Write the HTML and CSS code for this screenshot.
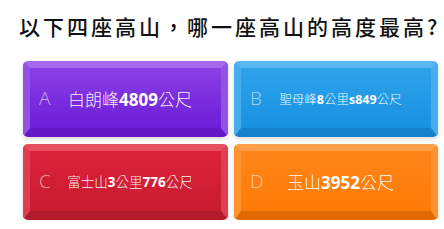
FILE: index.html
```html
<!DOCTYPE html>
<html lang="zh-Hant">
<head>
    <meta charset="UTF-8">
    <meta name="viewport" content="width=device-width, initial-scale=1.0">
    <title>高山問答</title>
    <link rel="stylesheet" href="styles.css">
</head>
<body>

<div class="quiz">
    <h1 class="question">以下四座高山，哪一座高山的高度最高?</h1>

    <div class="options">
        <button class="option option-a">
            <span class="key">A</span>
            <span class="label size-lg">白朗峰<b>4809</b>公尺</span>
        </button>
        <button class="option option-b">
            <span class="key">B</span>
            <span class="label size-sm">聖母峰<b>8</b>公里<b>s849</b>公尺</span>
        </button>
        <button class="option option-c">
            <span class="key">C</span>
            <span class="label size-md">富士山<b>3</b>公里<b>776</b>公尺</span>
        </button>
        <button class="option option-d">
            <span class="key">D</span>
            <span class="label size-lg">玉山<b>3952</b>公尺</span>
        </button>
    </div>
</div>

</body>
</html>
```

FILE: styles.css
```css
body {
    margin: 0;
    background-color: #ffffff;
    font-family: 'Open Sans', 'Noto Sans CJK TC', sans-serif;
}
.quiz {
    padding: 11px 6px 0 23px;
}
.question {
    margin: 0 0 0 -4px;
    height: 50px;
    font-family: 'Noto Sans CJK TC', sans-serif;
    font-size: 21px;
    font-weight: 500;
    letter-spacing: 3px;
    line-height: 30px;
    color: #111111;
    white-space: nowrap;
}
.options {
    display: grid;
    grid-template-columns: 205px 204px;
    grid-auto-rows: 76px;
    column-gap: 6px;
    row-gap: 7px;
}
.option {
    display: grid;
    grid-template-columns: 26px 1fr 26px;
    align-items: center;
    padding: 0 0 0 9px;
    border-width: 7px 7px 9px 7px;
    border-style: solid;
    border-radius: 5px;
    box-shadow: 0 2px 4px rgba(0, 0, 0, 0.15);
    color: #ffffff;
    font-family: inherit;
    cursor: pointer;
}
.key {
    font-size: 19px;
    font-weight: 300;
    color: rgba(255, 255, 255, 0.6);
    text-align: left;
}
.label {
    text-align: center;
    white-space: nowrap;
    font-weight: 300;
    color: rgba(255, 255, 255, 0.95);
}
.label b {
    font-weight: 700;
    color: #ffffff;
}
.size-lg { font-size: 17px; }
.size-md { font-size: 13.5px; }
.size-sm { font-size: 12.5px; }

.option-a {
    background: linear-gradient(#8b3fe4, #6d1dd8);
    border-color: #a468ea #9352e6 #6418c6 #9352e6;
}
.option-b {
    background: linear-gradient(#2ea3ea, #1891e2);
    border-color: #5ab7f0 #46aeee #1580cc #46aeee;
}
.option-c {
    background: linear-gradient(#dc2239, #c81c31);
    border-color: #e4525f #e03e4f #b01a2a #e03e4f;
}
.option-d {
    background: linear-gradient(#ff861a, #ff7a06);
    border-color: #ffa04c #ff9230 #e06a00 #ff9230;
}
```
